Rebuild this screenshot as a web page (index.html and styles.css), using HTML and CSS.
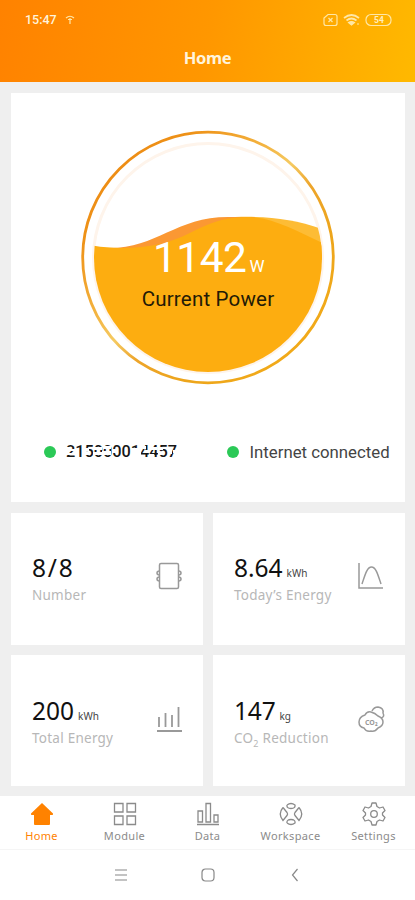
FILE: index.html
```html
<!DOCTYPE html>
<html lang="en">
<head>
<meta charset="utf-8">
<title>Home</title>
<link rel="stylesheet" href="styles.css">
</head>
<body>
<header class="header">
  <div class="status">
    <span class="clock">15:47</span>
    <svg class="hotspot" width="10" height="10" viewBox="0 0 10 10"><path d="M1 3Q5-.5 9 3M3 4.500h4M5 3v6" /></svg>
    <svg class="indicators" width="70" height="14" viewBox="0 0 70 14">
      <path d="M5 1.500h7q2 0 2 2v7q0 2-2 2H3q-2 0-2-2V5z"/>
      <path d="M5.500 5l4 4m0-4l-4 4" />
      <path d="M21 5Q28.500-1 36 5M23.500 7.500Q28.500 3.500 33.500 7.500" stroke-width="1.700"/>
      <path class="solid" d="M25.500 9.500Q28.500 7.500 31.500 9.500L28.500 12z"/>
      <path d="M34 11h2"/>
      <rect x="43" y="1.500" width="25" height="11" rx="5"/>
      <text x="51" y="10.300">54</text>
    </svg>
  </div>
  <h1 class="title">Home</h1>
</header>
<main class="content">
  <section class="power">
    <div class="gauge">
      <svg class="dial" width="256" height="256" viewBox="0 0 256 256">
        <defs>
          <linearGradient id="ring" x1="0" y1="0" x2="1" y2="1">
            <stop offset="0" stop-color="#ed850f"/><stop offset=".22" stop-color="#ee9218"/><stop offset=".38" stop-color="#f3b23e"/><stop offset=".48" stop-color="#f5ca62"/><stop offset=".56" stop-color="#eda52b"/><stop offset=".7" stop-color="#eda51b"/><stop offset="1" stop-color="#f5ae17"/>
          </linearGradient>
          <clipPath id="bowl"><circle cx="128" cy="128" r="114"/></clipPath>
        </defs>
        <circle cx="128" cy="127.500" r="125.300" fill="#fff" stroke="url(#ring)" stroke-width="2.800"/>
        <circle cx="128" cy="128" r="114.500" fill="#fff" stroke="#fef4eb" stroke-width="3"/>
        <g clip-path="url(#bowl)">
          <path fill="#fdbc35" d="M155 87C190 86 215 89 245 100V130H155z"/>
          <path fill="#fb9833" d="M25 118C75 120 95 87 148 87H175L160 125z"/>
          <path fill="#fdad10" d="M12 115.500C30 119 58 119 80 114C115 106 125 87 169 87C195 88 220 103 245 114V250H12z"/>
        </g>
      </svg>
      <div class="reading">
        <div class="watts">1142<span>W</span></div>
        <div class="caption">Current Power</div>
      </div>
    </div>
    <div class="links">
      <div class="link"><i class="dot"></i><span class="serial">215000014457<svg class="redaction" width="112" height="14" viewBox="0 0 112 14"><path d="M0 3h5v2H0zM4 5h6v2H4zM0 9h8v2H0zM18 4h5v3h-5zM18 9h6v2h-6zM27 3h9v3h-9zM27 8h9v3h-9zM37 2h8v3h-8zM36 7h9v4h-9zM46 5h4v4h-4zM65 4h10v10H65zM77 2h3v3h-3zM79 6h4v3h-4zM83 3h8v3h-8zM83 10h5v4h-5zM92 3h5v3h-5zM92 9h6v2h-6zM102 5h4v5h-4zM107 6h5v3h-5z"/></svg></span></div>
      <div class="link"><i class="dot"></i><span class="internet">Internet connected</span></div>
    </div>
  </section>
  <section class="stats">
    <article class="stat">
      <div><div class="value spaced">8/8</div><div class="label">Number</div></div>
      <svg class="icon" width="28" height="28" viewBox="0 0 28 28"><path d="M6 1.500h16q1.500 0 1.500 1.500v22q0 1.500-1.500 1.500H6Q4.500 26.500 4.500 25V3Q4.500 1.500 6 1.500z"/><path d="M4.500 9q-2.500 0-2.500 2t2.500 2M4.500 15Q2 15 2 17t2.500 2M23.500 9Q26 9 26 11t-2.500 2M23.500 15q2.500 0 2.500 2t-2.500 2"/></svg>
    </article>
    <article class="stat">
      <div><div class="value">8.64<small>kWh</small></div><div class="label">Today’s Energy</div></div>
      <svg class="icon" width="28" height="28" viewBox="0 0 28 28"><path d="M2 1v25h24M5 22C8 13 10 5 14.500 5S21 13 24 22"/></svg>
    </article>
    <article class="stat low">
      <div><div class="value">200<small>kWh</small></div><div class="label">Total Energy</div></div>
      <svg class="icon" width="28" height="28" viewBox="0 0 28 28"><path d="M4 12v10M10.500 8v14M17 10v12M23.500 2v20M2 26h25" stroke-width="1.800"/></svg>
    </article>
    <article class="stat low">
      <div><div class="value"><span class="narrow">147</span><small>kg</small></div><div class="label">CO<sub>2</sub> Reduction</div></div>
      <svg class="icon" width="28" height="28" viewBox="0 0 28 28"><path d="M8 10Q10 6 14 7T21 11Q26 13 26 17T21 23Q18 27 14 26Q9 27 7 23Q2 22 2 17Q2 12 8 10zM15 6Q17 2 21 2Q27 3 26 8Q28 12 24 13"/><text x="8" y="20">CO₂</text></svg>
    </article>
  </section>
</main>
<nav class="tabs">
  <a class="tab active"><svg width="24" height="24" viewBox="0 0 24 24"><path d="M12 1L23 11.500q.5 1.500-1 1.500h-2v9q0 1-1 1H5q-1 0-1-1v-9H2q-1.500 0-1-1.500z"/></svg>Home</a>
  <a class="tab"><svg width="24" height="24" viewBox="0 0 24 24"><path d="M1.500 1.500h8.500v8.500H1.500zM14 1.500h8.500v8.500H14zM1.500 14h8.500v8.500H1.500zM14 14h8.500v8.500H14z"/></svg>Module</a>
  <a class="tab"><svg width="24" height="24" viewBox="0 0 24 24"><path d="M2 9h4.500v11H2zM10 1.500h4.500V20H10zM18 13h4v7h-4zM1 22.500h22"/></svg>Data</a>
  <a class="tab"><svg width="24" height="24" viewBox="0 0 24 24"><path d="M8 3Q12 0 16 3Q16.500 6.500 12 6.500T8 3M8 21Q12 24 16 21Q16.500 17.500 12 17.500T8 21M4 5.500L8 10.500Q9 12 8 13.500L4 18.500Q-1.500 12 4 5.500M20 5.500L16 10.500Q15 12 16 13.500L20 18.500Q25.500 12 20 5.500"/></svg>Workspace</a>
  <a class="tab"><svg width="24" height="24" viewBox="0 0 24 24"><path stroke-linejoin="round" d="M10 1h4l1 3.500 2.500 1.500 3.500-1 2 3.500-2.500 2.500v2l2.500 2.500-2 3.500-3.500-1-2.500 1.500-1 3.500h-4l-1-3.500-2.500-1.500-3.500 1-2-3.500 2.500-2.500v-2L1 8.500 3 5l3.500 1L9 4.500z"/><circle cx="12" cy="12" r="3.300"/></svg>Settings</a>
</nav>
<footer class="system">
  <svg width="14" height="14" viewBox="0 0 14 14"><path d="M1 2h12M1 7h12M1 12h12"/></svg>
  <svg width="14" height="14" viewBox="0 0 14 14"><rect x="1" y="1" width="12" height="12" rx="3.500"/></svg>
  <svg width="14" height="14" viewBox="0 0 14 14"><path d="M9.500 1L4.500 7L9.500 13"/></svg>
</footer>
</body>
</html>
```

FILE: styles.css
```css
* { box-sizing: border-box; }
body { margin: 0; width: 415px; height: 900px; display: flex; flex-direction: column; overflow: hidden; background: #fff; font-family: "Noto Sans", sans-serif; }
svg { display: block; flex: none; }
.header { height: 82px; flex: none; background: linear-gradient(100deg, #ff8200, #ff9700 50%, #ffb900); color: #fff4dc; }
.status { height: 40px; display: flex; align-items: center; padding: 0 22px 0 25px; }
.clock { font: 500 12.5px/16px Roboto, sans-serif; width: 40px; }
.hotspot, .indicators { fill: none; stroke: #ffe7a6; stroke-width: 1.2; }
.indicators { margin-left: auto; }
.indicators .solid { fill: #ffe7a6; }
.indicators text { font: 700 8.5px Roboto, sans-serif; fill: #ffedbe; stroke: none; }
.title { margin: 6px 0 0; text-align: center; font: 700 16.5px/24px "Noto Sans", sans-serif; letter-spacing: -.3px; }
.content { height: 714px; flex: none; padding: 11px 10px 0 11px; background: #efefef; }
.power { height: 409px; background: #fff; padding-top: 37px; }
.gauge { width: 256px; height: 256px; margin-left: 69px; display: grid; }
.gauge > * { grid-area: 1 / 1; }
.reading { padding-top: 101px; text-align: center; font-family: Roboto, sans-serif; z-index: 1; }
.watts { color: #fff; font-size: 42.5px; line-height: 54px; height: 54px; letter-spacing: -.5px; padding-left: 1px; }
.watts span { font-size: 17px; margin-left: 3px; }
.caption { font-size: 20.5px; line-height: 26px; margin-top: 1px; color: #231a06; letter-spacing: .2px; }
.links { display: flex; margin-top: 53px; padding-left: 33px; }
.link { display: flex; align-items: center; height: 26px; width: 184px; }
.link + .link { padding-left: 3px; }
.dot { width: 12px; height: 12px; border-radius: 50%; background: #2bc957; margin-right: 10px; flex: none; }
.serial, .internet { font: 16.8px/24px Roboto, sans-serif; color: #444; white-space: nowrap; }
.serial { position: relative; font-size: 16.3px; font-weight: 500; color: #161616; }
.redaction { position: absolute; left: 0; top: 4px; fill: #fff; }
.stats { display: grid; grid-template-columns: 192px 192px; grid-template-rows: 132px 131px; gap: 10px; margin-top: 11px; }
.stat { background: #fff; display: flex; justify-content: space-between; padding: 37px 20px 0 21px; }
.stat.low { padding-top: 38px; }
.value { font-size: 24.5px; line-height: 36px; height: 36px; color: #111; white-space: nowrap; }
.spaced { letter-spacing: 1.8px; }
.narrow { letter-spacing: -.2px; }
.value small { font-size: 10px; margin-left: 4px; color: #444; }
.label { font-size: 13.5px; line-height: 18px; color: #b7b7b7; letter-spacing: .25px; white-space: nowrap; }
.label sub { font-size: 9px; line-height: 0; }
.icon { margin-top: 12px; fill: none; stroke: #999; stroke-width: 1.5; }
.icon text { font: 700 7px "Noto Sans", sans-serif; fill: #999; stroke: none; }
.tabs { height: 54px; flex: none; border-bottom: 1px solid #f5f5f5; display: grid; grid-template-columns: repeat(5, 83px); }
.tab { display: flex; flex-direction: column; align-items: center; padding-top: 6px; font-size: 11px; line-height: 20px; color: #8b8b8b; letter-spacing: .35px; }
.tab svg { fill: none; stroke: #8b8b8b; stroke-width: 1.3; }
.tab.active { color: #ff8200; }
.tab.active svg { fill: #ff8200; stroke: none; }
.system { height: 50px; display: flex; justify-content: center; gap: 73px; padding-top: 18px; }
.system svg { fill: none; stroke: #888; stroke-width: 1.2; }
```
